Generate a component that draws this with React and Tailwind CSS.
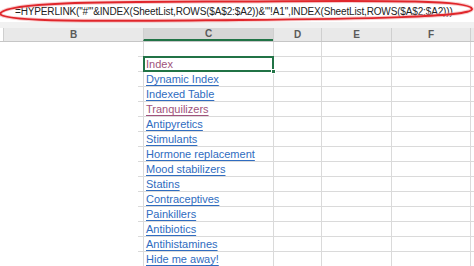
const COLS = [
  { id: 'B', w: 'w-[140px]' },
  { id: 'C', w: 'w-[130px]' },
  { id: 'D', w: 'w-[48px]' },
  { id: 'E', w: 'w-[70px]' },
  { id: 'F', w: 'w-[79px]' },
]

const LINKS = [
  { text: 'Index', visited: true, active: true },
  { text: 'Dynamic Index' },
  { text: 'Indexed Table' },
  { text: 'Tranquilizers', visited: true },
  { text: 'Antipyretics' },
  { text: 'Stimulants' },
  { text: 'Hormone replacement' },
  { text: 'Mood stabilizers' },
  { text: 'Statins' },
  { text: 'Contraceptives' },
  { text: 'Painkillers' },
  { text: 'Antibiotics' },
  { text: 'Antihistamines' },
  { text: 'Hide me away!' },
]

const FORMULA = `=HYPERLINK("#'"&INDEX(SheetList,ROWS($A$2:$A2))&"'!A1",INDEX(SheetList,ROWS($A$2:$A2)))`

function Row({ link }) {
  return (
    <div className="flex h-[15px] shrink-0">
      <div className="w-[3px] shrink-0" />
      {/* column B — no gridlines except its tail */}
      <div className="flex w-[140px] shrink-0">
        <div className="w-[135px]" />
        <div className="flex-1 border-b border-[#dadada]" />
      </div>
      <div className="relative flex w-[130px] shrink-0 items-end border-b border-l border-[#dadada] pb-[1px] pl-[2px]">
        {link && (
          <span
            className={`text-[11px] leading-[12px] underline underline-offset-[2px] ${
              link.visited ? 'text-[#a0537c]' : 'text-[#2f6cc0]'
            }`}
          >
            {link.text}
          </span>
        )}
        {link?.active && (
          <>
            <div className="absolute -left-[1px] -top-[1px] bottom-[-1px] right-[-1px] border-2 border-[#217346]" />
            <div className="absolute -bottom-[3px] -right-[3px] h-[5px] w-[5px] border border-white bg-[#217346]" />
          </>
        )}
      </div>
      <div className="w-[48px] shrink-0 border-b border-l border-[#dadada]" />
      <div className="w-[70px] shrink-0 border-b border-l border-[#dadada]" />
      <div className="w-[79px] shrink-0 border-b border-l border-[#dadada]" />
      <div className="flex-1 border-b border-l border-[#dadada]" />
    </div>
  )
}

export default function App() {
  return (
    <div className="relative flex h-[266px] w-[474px] flex-col overflow-hidden bg-white font-['Liberation_Sans',Arial,sans-serif]">
      {/* formula bar */}
      <div className="flex h-[22px] shrink-0 items-center bg-white pl-[15px] pt-[2px]">
        <span className="whitespace-nowrap text-[10px] leading-none tracking-[-0.15px] text-[#222]">{FORMULA}</span>
      </div>
      <div className="h-[6px] shrink-0 bg-[#f1f1f1]" />

      {/* column headers */}
      <div className="flex h-[14px] shrink-0 border-b border-[#c6c6c6] bg-[#e9e9e9] text-[10px] font-bold text-[#5a5a5a]">
        <div className="w-[3px] shrink-0 bg-white" />
        {COLS.map((c) => (
          <div
            key={c.id}
            className={`${c.w} flex shrink-0 items-center justify-center border-l border-[#cfcfcf] ${
              c.id === 'C' ? 'border-b-2 border-b-[#217346] bg-[#d6d6d6]' : ''
            }`}
          >
            {c.id}
          </div>
        ))}
        <div className="flex-1 border-l border-[#cfcfcf]" />
      </div>

      {/* grid */}
      <Row />
      {LINKS.map((l) => (
        <Row key={l.text} link={l} />
      ))}

      {/* red annotation ellipse */}
      <svg className="pointer-events-none absolute left-0 top-0" width="474" height="30" viewBox="0 0 474 30">
        <path
          d="M0 14 C 4 1, 120 2, 240 1.5 C 360 1, 470 -1, 472 9 C 473 17, 360 19, 240 20 C 120 21, 6 23, 0 14 Z"
          fill="none"
          stroke="#f2a0a2"
          strokeOpacity="0.5"
          strokeWidth="4"
        />
        <path
          d="M0 14 C 4 1, 120 2, 240 1.5 C 360 1, 470 -1, 472 9 C 473 17, 360 19, 240 20 C 120 21, 6 23, 0 14 Z"
          fill="none"
          stroke="#e0262b"
          strokeWidth="2"
        />
      </svg>
    </div>
  )
}
